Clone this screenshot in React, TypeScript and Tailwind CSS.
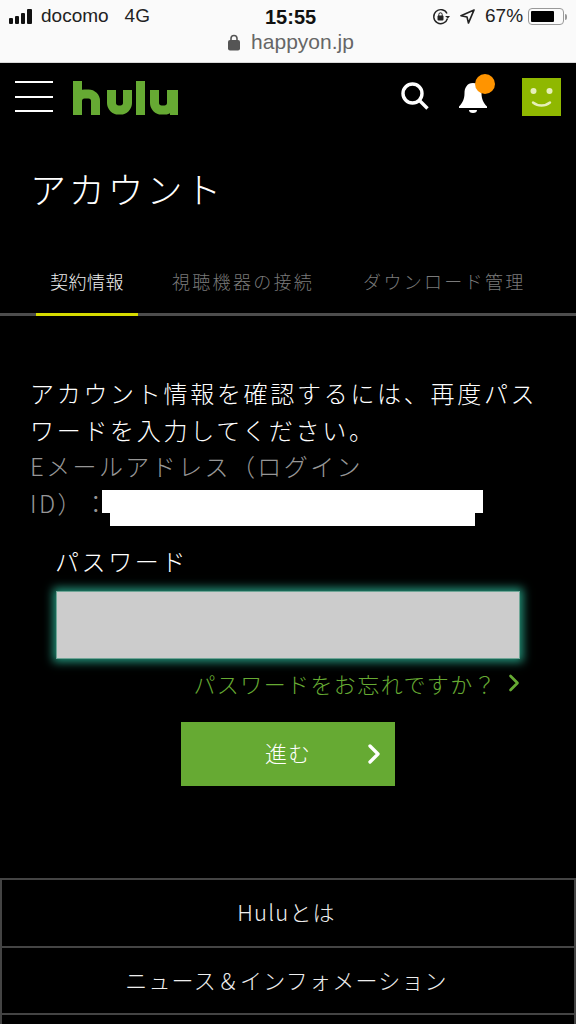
import { ChevronRight } from "lucide-react";

const jp = "font-['Noto_Sans_CJK_JP',sans-serif] [text-spacing-trim:space-all]";
const ui = "font-['Liberation_Sans',sans-serif]";

function StatusBar() {
  return (
    <div className={`h-[63px] bg-[#fafafa] border-b border-[#d8d8d8] flex flex-col ${ui}`}>
      <div className="h-[31px] pt-[2px] pl-[9px] flex items-center text-[#222]">
        <div className="w-[256px] flex items-center gap-[9px] text-[19px]">
          <div className="flex items-end gap-[2px] h-[15px]">
            <span className="w-[4px] h-[6px] rounded-[1px] bg-[#111]" />
            <span className="w-[4px] h-[8px] rounded-[1px] bg-[#111]" />
            <span className="w-[4px] h-[11px] rounded-[1px] bg-[#111]" />
            <span className="w-[5px] h-[15px] rounded-[1px] bg-[#111]" />
          </div>
          <span>docomo</span>
          <span className="ml-[7px]">4G</span>
        </div>
        <span className="text-[20px] font-bold text-[#111] w-[167px]">15:55</span>
        <div className="flex items-center text-[19px]">
          <svg width="18" height="18" viewBox="0 0 18 18" fill="none">
            <path d="M15.500 10.500A7 7 0 1 1 15 5.500" stroke="#222" strokeWidth="1.400" />
            <path d="M13 8l3 2.500L18 8" fill="#222" />
            <rect x="5.500" y="7.500" width="6" height="5" rx="1" fill="#222" />
            <path d="M6.800 8V6.500a1.700 1.700 0 0 1 3.400 0V8" stroke="#222" strokeWidth="1" />
          </svg>
          <svg width="15" height="15" viewBox="0 0 16 16" fill="none" className="ml-[10px]">
            <path d="M15 1L1 7.200l6.500 1.300L9 15z" stroke="#222" strokeWidth="1.700" strokeLinejoin="round" />
          </svg>
          <span className="ml-[10px]">67%</span>
          <div className="flex items-center gap-[1px] ml-[5px]">
            <div className="w-[36px] h-[17px] rounded-[4px] border border-[#999] p-[2px]">
              <div className="w-[23px] h-full rounded-[1px] bg-black" />
            </div>
            <span className="w-[2px] h-[6px] rounded-r-[2px] bg-[#999]" />
          </div>
        </div>
      </div>
      <div className="flex-1 flex items-start justify-center gap-[10px] pl-[5px] text-[#666] text-[21px] leading-[22px]">
        <svg width="14" height="17" viewBox="0 0 14 17" className="mt-[3px]" fill="none">
          <rect x="1" y="6" width="12" height="10.500" rx="2" fill="#555" />
          <path d="M4 7V4.500a3 3 0 0 1 6 0V7" stroke="#555" strokeWidth="1.600" />
        </svg>
        <span>happyon.jp</span>
      </div>
    </div>
  );
}

function Header() {
  return (
    <div className="h-[66px] flex items-center pl-[15px] pr-[15px]">
      <div className="w-[38px] h-[31px] mt-[1px] flex flex-col justify-between">
        <span className="h-[2px] bg-white" />
        <span className="h-[2px] bg-white" />
        <span className="h-[2px] bg-white" />
      </div>
      {/* hulu logo */}
      <svg width="106" height="34" viewBox="0 0 106 34" fill="none" className="ml-[20px] mt-[4px]" aria-label="hulu">
        <g stroke="#66aa33" strokeWidth="9">
          <path d="M4.500 0V34" />
          <path d="M4.500 20a7 7 0 0 1 7-7h4a7 7 0 0 1 7 7V34" />
          <path d="M38.500 9V22a7 7 0 0 0 7 7h2a7 7 0 0 0 7-7V9" />
          <path d="M67.500 0V34" />
          <path d="M81.500 9V22a7 7 0 0 0 7 7h3a7 7 0 0 0 7-7V9" />
          <path d="M101 9V34" strokeWidth="8" />
        </g>
      </svg>
      <div className="ml-auto flex items-center">
        <svg width="30" height="30" viewBox="0 0 30 30" fill="none">
          <circle cx="12.500" cy="12.500" r="9.500" stroke="white" strokeWidth="3.400" />
          <path d="M19.500 19.500L27.500 27.500" stroke="white" strokeWidth="3.400" />
        </svg>
        <div className="relative w-[30px] h-[34px] ml-[28px] mt-[2px]">
          <svg width="30" height="34" viewBox="0 0 30 34" className="absolute left-0 top-0">
            <path d="M15 3C9 3 6.500 8 6.500 13c0 6-2 10-5.500 13.500V28h28v-1.500C25.500 23 23.500 19 23.500 13 23.500 8 21 3 15 3z" fill="white" />
            <path d="M11 30h8a4 3 0 0 1-8 0z" fill="white" />
          </svg>
          <span className="absolute left-[17px] -top-[6px] w-[20px] h-[20px] rounded-full bg-[#ff9400]" />
        </div>
        <div className="w-[39px] h-[38px] ml-[34px] mt-[1px] bg-[#8fb800] flex items-center justify-center">
          <svg width="39" height="38" viewBox="0 0 39 38" fill="none">
            <circle cx="11.500" cy="13" r="3" fill="#e6efb8" />
            <circle cx="27.500" cy="13" r="3" fill="#e6efb8" />
            <path d="M11 24.500c5 4 12 4 17 0" stroke="#e6efb8" strokeWidth="2.400" strokeLinecap="round" />
          </svg>
        </div>
      </div>
    </div>
  );
}

function Tabs() {
  return (
    <div className="mt-[50px] h-[54px] border-b-[3px] border-[#4d4d4d] flex text-[18px] tracking-[2.300px] leading-[26px] text-[#7a7a7a] font-light">
      <div className="ml-[36px] w-[102px] h-[54px] border-b-[3px] border-[#d6dc00] text-center text-[#eeeeee] pt-[6px] tracking-[0.500px]">
        契約情報
      </div>
      <div className="ml-[34px] pt-[6px]">視聴機器の接続</div>
      <div className="ml-[49px] pt-[6px]">ダウンロード管理</div>
    </div>
  );
}

function FooterRow({ label }: { label: string }) {
  return (
    <div className="h-[67.500px] pb-[2px] pr-[3px] border-t-2 border-[#444] flex items-center justify-center text-[22px] tracking-[1.200px] text-[#eeeeee] font-light">
      {label}
    </div>
  );
}

export default function App() {
  return (
    <div className={`w-[576px] h-[1024px] overflow-hidden bg-black text-white ${jp}`}>
      <StatusBar />
      <Header />
      <h1 className="mt-[35px] ml-[30px] text-[36px] leading-[48px] tracking-[2.800px] font-light">アカウント</h1>
      <Tabs />

      <div className="relative mt-[59px] pl-[30px] pr-[31px] text-[24px] leading-[36.500px] tracking-[2.700px] font-light">
        <p>アカウント情報を確認するには、再度パス<br />ワードを入力してください。</p>
        <p className="text-[#969696] w-[360px] tracking-[2.400px]">Eメールアドレス（ログイン ID）：</p>
        {/* redacted address */}
        <span className="absolute left-[102px] top-[115px] w-[381px] h-[23px] bg-white" />
        <span className="absolute left-[110px] top-[138px] w-[365px] h-[13px] bg-white" />
      </div>

      <form className="mt-[22px] px-[56px]">
        <label className="block text-[24px] leading-[36px] tracking-[2.600px] font-light -ml-[1px]">パスワード</label>
        <div className="mt-[12px] w-[464px] h-[68px] bg-[#cccccc] border border-[#6fa596] shadow-[0_0_9px_3px_#23937a]" />
        <a className="mt-[9px] w-[464px] flex items-center justify-end text-[22px] leading-[30px] tracking-[1.400px] text-[#66aa33] font-light">
          パスワードをお忘れですか？
          <ChevronRight size={28} strokeWidth={2.300} className="ml-[3px] -mr-[8px]" />
        </a>
        <button type="button" className="relative block mt-[24px] ml-[125px] w-[214px] h-[64px] pb-[4px] bg-[#66aa33] text-[22px] tracking-[1px] font-light text-white">
          進む
          <ChevronRight size={32} strokeWidth={2.500} className="absolute right-[5px] top-[16px]" />
        </button>
      </form>

      <div className="mt-[92px] border-x-2 border-[#444]">
        <FooterRow label="Huluとは" />
        <FooterRow label="ニュース＆インフォメーション" />
        <FooterRow label="" />
      </div>
    </div>
  );
}
